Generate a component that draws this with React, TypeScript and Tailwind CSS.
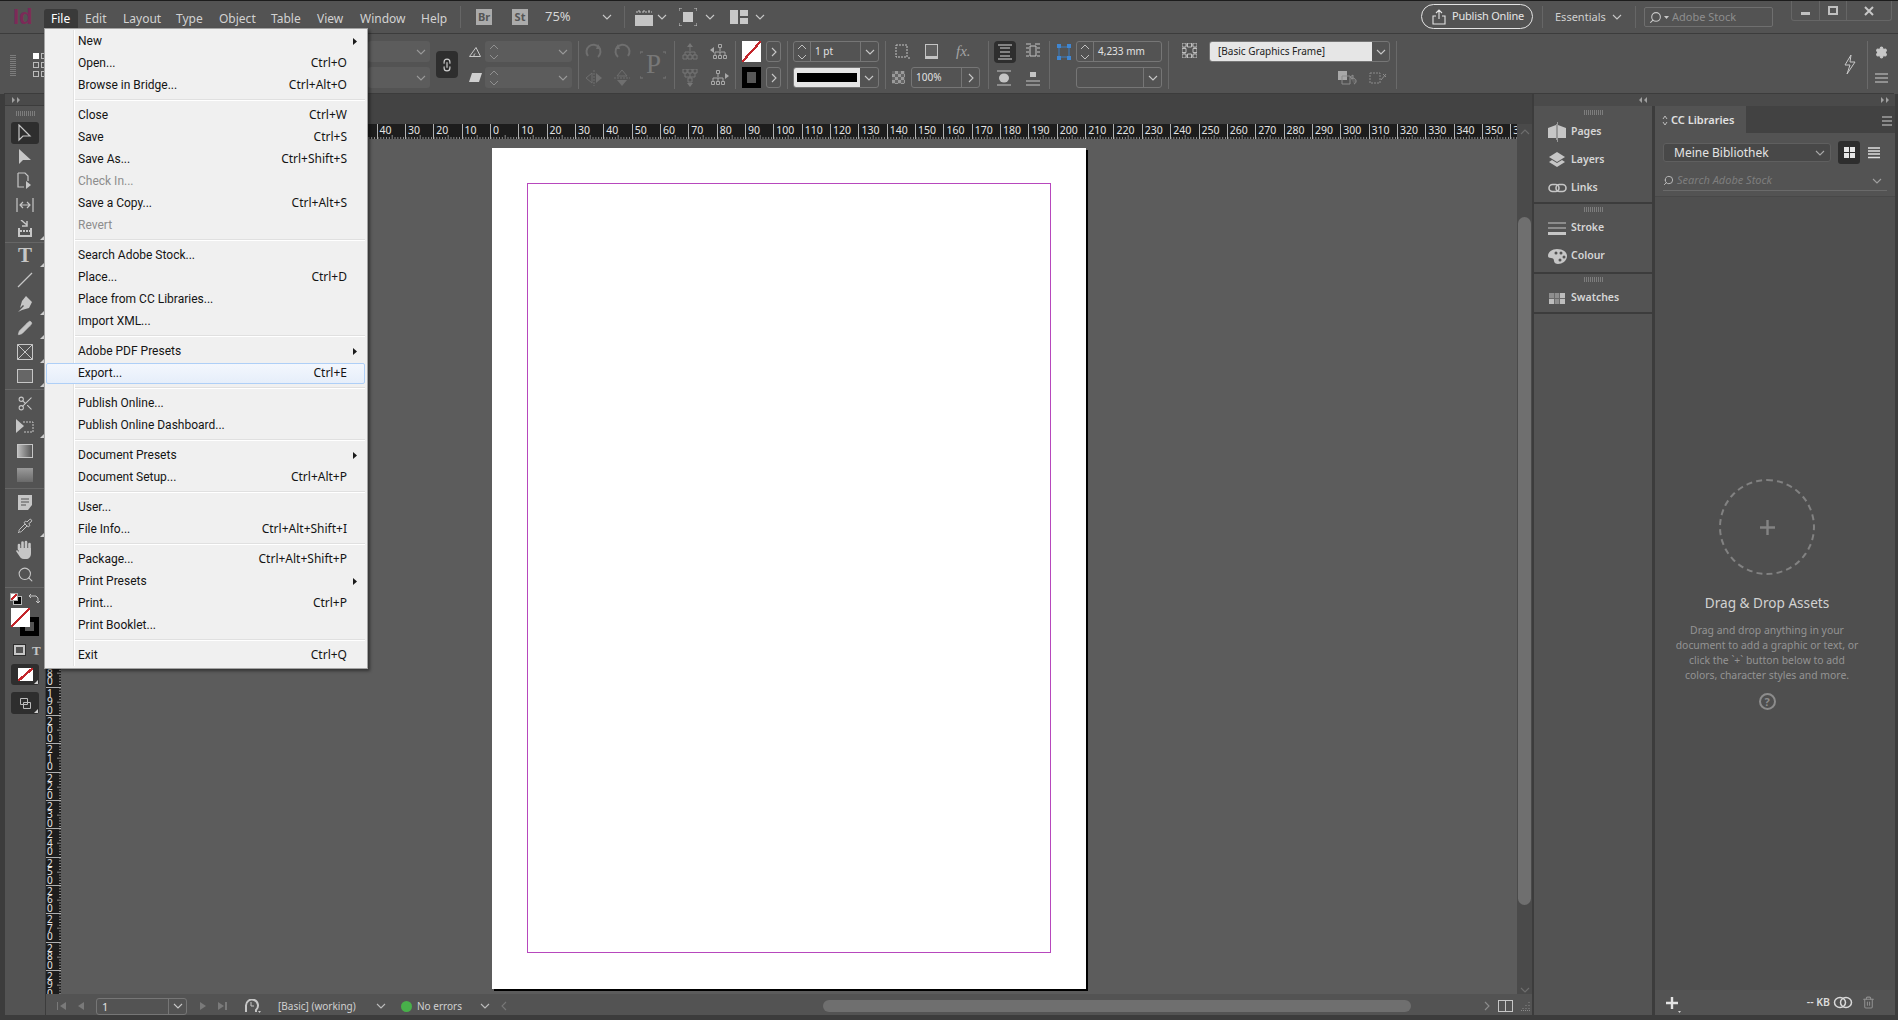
import React from "react";
import { Pencil, Pipette, Scissors, Search, Settings, Trash2, Link2 } from "lucide-react";

const FONT = "font-['Noto_Sans','Open_Sans',sans-serif]";

const Svg = ({ w = 20, h = 20, vb, className = "", children }: { w?: number; h?: number; vb?: string; className?: string; children: React.ReactNode }) => (
  <svg width={w} height={h} viewBox={vb ?? `0 0 ${w} ${h}`} className={`shrink-0 ${className}`} fill="none">
    {children}
  </svg>
);

const Chevron = ({ color = "#c8c8c8", className = "" }: { color?: string; className?: string }) => (
  <Svg w={10} h={6} className={className}><path d="M1 1l4 4 4-4" stroke={color} strokeWidth="1.1" /></Svg>
);
const ChevronR = ({ color = "#c8c8c8" }: { color?: string }) => (
  <Svg w={6} h={10}><path d="M1 1l4 4-4 4" stroke={color} strokeWidth="1.1" /></Svg>
);
const Stepper = ({ color = "#c0c0c0" }: { color?: string }) => (
  <Svg w={10} h={18}><path d="M1 6l4-4 4 4M1 12l4 4 4-4" stroke={color} strokeWidth="1" /></Svg>
);
const Corner = () => (
  <Svg w={4} h={4} className="absolute right-[1px] bottom-[1px]"><path d="M4 0v4H0z" fill="#cfcfcf" /></Svg>
);
const Grip = ({ className = "" }: { className?: string }) => (
  <div className={`h-[5px] w-[19px] bg-[repeating-linear-gradient(90deg,#7d7d7d_0_1px,transparent_1px_2px)] ${className}`} />
);
const Ham = ({ w = 16 }: { w?: number }) => (
  <Svg w={w} h={12}><path d={`M0 2h${w}M0 6h${w}M0 10h${w}`} stroke="#cfcfcf" strokeWidth="1.2" /></Svg>
);

/* ---------- top menu ---------- */
const topMenus = [
  { l: "File", c: "w-[34px] bg-[#3a3a3a] text-white rounded-t-[3px]" },
  { l: "Edit", c: "w-[38px]" },
  { l: "Layout", c: "w-[53px]" },
  { l: "Type", c: "w-[43px]" },
  { l: "Object", c: "w-[52px]" },
  { l: "Table", c: "w-[46px]" },
  { l: "View", c: "w-[43px]" },
  { l: "Window", c: "w-[61px]" },
  { l: "Help", c: "w-[40px]" },
];

const TopBar = () => (
  <div className="h-[34px] shrink-0 flex items-center border-t border-[#1c1c1c] border-b border-b-[#3c3c3c] text-[12px] text-[#d2d2d2] relative">
    <div className="w-[44px] shrink-0 pl-[13px] text-[22px] leading-none font-bold font-['Liberation_Sans',sans-serif] text-[#7c2a58]">Id</div>
    <div className="flex self-end h-[24px]">
      {topMenus.map((m) => (
        <div key={m.l} className={`pl-[7px] leading-[20px] h-[20px] ${m.c}`}>{m.l}</div>
      ))}
    </div>
    <div className="ml-[6px] w-px h-[22px] bg-[#666]" />
    <div className="ml-[15px] w-[16px] h-[16px] bg-[#ababab] text-[#555] text-[11px] font-bold leading-[16px] text-center">Br</div>
    <div className="ml-[20px] w-[16px] h-[16px] bg-[#ababab] text-[#555] text-[11px] font-bold leading-[16px] text-center">St</div>
    <div className="ml-[17px] w-[57px] text-[13px] text-[#d6d6d6]">75%</div>
    <Chevron />
    <div className="ml-[12px] w-px h-[22px] bg-[#666]" />
    <Svg w={18} h={18} className="ml-[10px]">
      <path d="M0 7h18v11H0z" fill="#c4c4c4" />
      <path d="M4 2v3M9 2v3M14 2v3M1 4h16" stroke="#c4c4c4" strokeDasharray="2 1" />
    </Svg>
    <Chevron className="ml-[4px]" />
    <Svg w={18} h={18} className="ml-[12px]">
      <path d="M4 4h10v10H4z" fill="#c8c8c8" />
      <path d="M0 3V0h3M15 0h3v3M18 15v3h-3M3 18H0v-3" stroke="#c8c8c8" />
    </Svg>
    <Chevron className="ml-[8px]" />
    <Svg w={18} h={14} className="ml-[15px]">
      <path d="M0 0h8v14H0zM10 0h8v6h-8zM10 8h8v6h-8z" fill="#c8c8c8" />
    </Svg>
    <Chevron className="ml-[7px]" />
    <div className="flex-1" />
    <div className="w-[112px] h-[25px] rounded-full border border-[#e4e4e4] flex items-center pl-[10px] gap-[6px] text-[11px] tracking-[-0.2px] text-[#e6e6e6] mb-[1px] whitespace-nowrap">
      <Svg w={14} h={16}><path d="M7 10V1M4 4l3-3 3 3M4 7H1v8h12V7h-3" stroke="#e4e4e4" strokeWidth="1.1" /></Svg>
      <span>Publish Online</span>
    </div>
    <div className="ml-[9px] w-px h-[22px] bg-[#666]" />
    <div className="ml-[12px] w-[57px] text-[11px] text-[#d0d0d0]">Essentials</div>
    <Chevron />
    <div className="ml-[13px] w-px h-[22px] bg-[#666]" />
    <div className="ml-[8px] w-[129px] h-[20px] rounded-[2px] border border-[#6f6f6f] flex items-center pl-[4px] gap-[2px] text-[11px] text-[#8e8e8e]">
      <Search size={13} color="#c8c8c8" className="-scale-x-100" />
      <Svg w={5} h={3}><path d="M0 0h5L2.500 3z" fill="#c8c8c8" /></Svg>
      <span className="ml-[1px]">Adobe Stock</span>
    </div>
    <div className="ml-[18px] w-[101px] h-[20px] self-start flex border border-t-0 border-[#666] rounded-b-[3px] shrink-0">
      <div className="w-[28px] flex items-center justify-center border-r border-[#666]"><div className="w-[9px] h-[3px] mt-[5px] bg-[#c0c0c0]" /></div>
      <div className="w-[27px] flex items-center justify-center border-r border-[#666]"><div className="w-[10px] h-[9px] border-2 border-[#c0c0c0]" /></div>
      <div className="flex-1 flex items-center justify-center">
        <Svg w={10} h={10}><path d="M1 1l8 8M9 1l-8 8" stroke="#c8c8c8" strokeWidth="2" /></Svg>
      </div>
    </div>
    <div className="w-[6px] shrink-0" />
  </div>
);

/* ---------- control panel ---------- */
const Sep = ({ className = "" }: { className?: string }) => <div className={`w-px h-[48px] bg-[#6a6a6a] shrink-0 ${className}`} />;
const EmptyField = ({ children, className = "" }: { children?: React.ReactNode; className?: string }) => (
  <div className={`h-[21px] rounded-[3px] bg-[#5c5c5c] flex items-center ${className}`}>{children}</div>
);
const StepField = () => (
  <EmptyField>
    <div className="w-[17px] flex justify-center"><Stepper color="#909090" /></div>
    <div className="flex-1" />
    <Chevron color="#999" className="mr-[4px]" />
  </EmptyField>
);
const Box = ({ children, className = "" }: { children?: React.ReactNode; className?: string }) => (
  <div className={`h-[21px] rounded-[3px] border border-[#767676] flex items-stretch text-[10px] text-[#e2e2e2] ${className}`}>{children}</div>
);
const Cell = ({ children, className = "" }: { children?: React.ReactNode; className?: string }) => (
  <div className={`flex items-center justify-center h-[21px] ${className}`}>{children}</div>
);

const ControlPanel = () => (
  <div className="h-[60px] shrink-0 flex items-center border-b border-[#3c3c3c] bg-[#535353] mx-[4px] pt-[2px]">
    <div className="w-[364px] shrink-0 flex items-center pl-[6px]">
      <div className="w-[6px] h-[22px] bg-[repeating-linear-gradient(0deg,#7d7d7d_0_1px,transparent_1px_2px)]" />
      <div className="ml-[17px] grid grid-cols-2 gap-y-[3px] gap-x-[2px] w-[14px]">
        <div className="w-[6px] h-[6px] bg-white" /><div className="w-[6px] h-[6px] border border-[#bbb]" />
        <div className="w-[6px] h-[6px] border border-[#bbb]" /><div className="w-[6px] h-[6px] border border-[#bbb]" />
        <div className="w-[6px] h-[6px] border border-[#bbb]" /><div className="w-[6px] h-[6px] border border-[#bbb]" />
      </div>
    </div>
    <div className="w-[62px] flex flex-col gap-[5px] shrink-0">
      <EmptyField className="justify-end"><Chevron color="#999" className="mr-[4px]" /></EmptyField>
      <EmptyField className="justify-end"><Chevron color="#999" className="mr-[4px]" /></EmptyField>
    </div>
    <div className="ml-[6px] w-[22px] h-[27px] rounded-[4px] bg-[#2e2e2e] flex items-center justify-center shrink-0">
      <Link2 size={14} color="#cfcfcf" className="rotate-90" />
    </div>
    <div className="ml-[8px] w-[19px] flex flex-col gap-[5px] shrink-0">
      <Cell><Svg w={13} h={11}><path d="M0.500 10.500h11L7 1.500z" stroke="#c8c8c8" /><path d="M5 10.500a3 3 0 0 1 1-3" stroke="#c8c8c8" /></Svg></Cell>
      <Cell><Svg w={13} h={11}><path d="M3 1h10l-3 9H0z" fill="#cfcfcf" /></Svg></Cell>
    </div>
    <div className="w-[87px] flex flex-col gap-[5px] shrink-0">
      <StepField />
      <StepField />
    </div>
    <Sep className="ml-[6px]" />
    <div className="w-[57px] grid grid-cols-2 gap-y-[5px] shrink-0 pl-[1px]">
      <Cell><Svg w={18} h={18}><path d="M3 13a7 7 0 1 1 10 1" stroke="#6f6f6f" strokeWidth="2" /><path d="M13 1l3 5h-5z" fill="#6f6f6f" /></Svg></Cell>
      <Cell><Svg w={18} h={18}><path d="M15 13a7 7 0 1 0-10 1" stroke="#6f6f6f" strokeWidth="2" /><path d="M5 1L2 6h5z" fill="#6f6f6f" /></Svg></Cell>
      <Cell><Svg w={18} h={16}><path d="M9 0v16" stroke="#6f6f6f" strokeDasharray="2 1" /><path d="M7 3v10L1 8z" stroke="#6f6f6f" /><path d="M11 3v10l6-5z" fill="#6f6f6f" /></Svg></Cell>
      <Cell><Svg w={16} h={18}><path d="M0 9h16" stroke="#6f6f6f" strokeDasharray="2 1" /><path d="M3 7h10L8 1z" stroke="#6f6f6f" /><path d="M3 11h10l-5 6z" fill="#6f6f6f" /></Svg></Cell>
    </div>
    <div className="w-[35px] h-[48px] shrink-0 flex items-center justify-center relative">
      <span className="text-[27px] leading-none font-['Liberation_Serif',serif] text-[#787878]">P</span>
      <Svg w={26} h={28} className="absolute left-[4px] top-[10px]"><path d="M0 3V1h3M23 1h3v2M26 25v2h-3M3 27H0v-2" stroke="#787878" /></Svg>
    </div>
    <Sep className="ml-[3px]" />
    <div className="w-[59px] grid grid-cols-2 gap-y-[5px] shrink-0">
      <Cell><Svg w={16} h={18}><path d="M8 4v4M3 9h10M3 9v3M8 9v3M13 9v3" stroke="#777" /><path d="M8 0l3 4H5z" fill="#777" /><path d="M1 12h4v4H1zM6 12h4v4H6zM11 12h4v4h-4z" stroke="#777" /></Svg></Cell>
      <Cell><Svg w={19} h={16}><path d="M10 4v3M5 8h10M5 8v3M10 8v3M15 8v3" stroke="#a8a8a8" /><path d="M8.500 0.500h3v3h-3zM3.500 11.500h3v3h-3zM8.500 11.500h3v3h-3zM13.500 11.500h3v3h-3z" stroke="#a8a8a8" /><path d="M4 3v6L0 6z" fill="#a8a8a8" /></Svg></Cell>
      <Cell><Svg w={16} h={18}><path d="M8 4v4M3 8h10M3 4v4M13 4v4" stroke="#777" /><path d="M1 0h4v4H1zM6 0h4v4H6zM11 0h4v4h-4zM6 9h4v4H6z" stroke="#777" /><path d="M5 14h6l-3 4z" fill="#777" /></Svg></Cell>
      <Cell><Svg w={19} h={16}><path d="M8 4v3M3 8h10M3 8v3M8 8v3M13 8v3" stroke="#a8a8a8" /><path d="M6.500 0.500h3v3h-3zM1.500 11.500h3v3h-3zM6.500 11.500h3v3h-3zM11.500 11.500h3v3h-3z" stroke="#a8a8a8" /><path d="M15 3v6l4-3z" fill="#a8a8a8" /></Svg></Cell>
    </div>
    <Sep className="ml-[1px]" />
    <div className="ml-[6px] flex flex-col gap-[5px] shrink-0 w-[39px]">
      <div className="flex items-center gap-[5px]">
        <div className="w-[19px] h-[21px] bg-[linear-gradient(to_bottom_right,#ffffff_46%,#c3262b_46%,#c3262b_54%,#ffffff_54%)]" />
        <div className="w-[15px] h-[21px] rounded-[3px] border border-[#767676] flex items-center justify-center"><ChevronR /></div>
      </div>
      <div className="flex items-center gap-[5px]">
        <div className="w-[19px] h-[21px] bg-black flex items-center justify-center"><div className="w-[9px] h-[11px] bg-[#575757]" /></div>
        <div className="w-[15px] h-[21px] rounded-[3px] border border-[#767676] flex items-center justify-center"><ChevronR /></div>
      </div>
    </div>
    <Sep className="ml-[6px]" />
    <div className="ml-[5px] w-[86px] flex flex-col gap-[5px] shrink-0">
      <Box>
        <div className="w-[17px] border-r border-[#767676] flex items-center justify-center"><Stepper /></div>
        <div className="flex-1 pl-[4px] leading-[19px]">1 pt</div>
        <div className="w-[18px] border-l border-[#767676] flex items-center justify-center"><Chevron /></div>
      </Box>
      <Box>
        <div className="flex-1 bg-[#e6e6e6] flex items-center justify-center rounded-l-[2px]"><div className="w-[60px] h-[9px] bg-black" /></div>
        <div className="w-[18px] flex items-center justify-center"><Chevron /></div>
      </Box>
    </div>
    <Sep className="ml-[6px]" />
    <div className="w-[102px] shrink-0 flex flex-col gap-[5px]">
      <div className="h-[21px] flex items-center pl-[9px] gap-[15px]">
        <Svg w={15} h={15}><path d="M1 1h11v12H1z" stroke="#c4c4c4" strokeDasharray="2 1" /><path d="M13 14h2" stroke="#c4c4c4" /></Svg>
        <div className="w-[13px] h-[15px] border border-[#c4c4c4] border-b-[3px] bg-[#606060]" />
        <span className="ml-[3px] text-[15px] italic font-['Liberation_Serif',serif] text-[#a4a4a4]">fx.</span>
      </div>
      <div className="h-[21px] flex items-center pl-[6px]">
        <div className="w-[13px] h-[13px] bg-[repeating-conic-gradient(#9a9a9a_0_25%,#666666_0_50%)] bg-[length:6px_6px]" />
        <Box className="ml-[6px] w-[69px]">
          <div className="flex-1 pl-[4px] leading-[19px]">100%</div>
          <div className="w-[18px] border-l border-[#767676] flex items-center justify-center"><ChevronR /></div>
        </Box>
      </div>
    </div>
    <Sep />
    <div className="w-[60px] grid grid-cols-[32px_28px] gap-y-[5px] shrink-0 pl-[5px]">
      <div className="w-[22px] h-[22px] rounded-[4px] bg-[#2e2e2e] flex items-center justify-center">
        <Svg w={14} h={16}><path d="M0 1h14M0 15h14M2 4h10M2 8h10M2 12h10" stroke="#d8d8d8" strokeWidth="1.200" /></Svg>
      </div>
      <Cell className="justify-start"><Svg w={14} h={16}><path d="M0 1h5M0 5h3M0 9h3M0 13h3M9 1h5M11 5h3M11 9h3M11 13h3M4 3h6v10H4z" stroke="#c4c4c4" /></Svg></Cell>
      <Cell className="!justify-start pl-[3px]"><Svg w={14} h={16}><path d="M0 1h14M0 15h14" stroke="#c4c4c4" /><ellipse cx="7" cy="8" rx="5" ry="4.500" fill="#c4c4c4" /></Svg></Cell>
      <Cell className="justify-start"><Svg w={14} h={16}><path d="M0 15h14M0 11h14" stroke="#c4c4c4" /><path d="M4 2h6v5H4z" fill="#c4c4c4" /></Svg></Cell>
    </div>
    <Sep />
    <div className="flex flex-col gap-[5px] shrink-0 ml-[7px]">
      <div className="flex items-center">
        <Svg w={14} h={16}>
          <path d="M2 3h10v10H2z" stroke="#3b7cc0" />
          <path d="M0 0h4v4H0zM10 0h4v4h-4zM0 12h4v4H0zM10 12h4v4h-4z" fill="#3f86d2" />
        </Svg>
        <Box className="ml-[5px] w-[86px]">
          <div className="w-[17px] border-r border-[#767676] flex items-center justify-center"><Stepper /></div>
          <div className="flex-1 pl-[4px] leading-[19px]">4,233 mm</div>
        </Box>
      </div>
      <div className="flex">
        <div className="w-[19px]" />
        <Box className="w-[86px]">
          <div className="flex-1" />
          <div className="w-[18px] border-l border-[#767676] flex items-center justify-center"><Chevron /></div>
        </Box>
      </div>
    </div>
    <Sep className="ml-[6px]" />
    <div className="w-[40px] h-[48px] shrink-0 flex items-start justify-center pt-[2px]">
      <Svg w={15} h={15}>
        <path d="M2 2h11v11H2z" stroke="#bdbdbd" />
        <path d="M0 0h4v4H0zM5.500 0h4v4h-4zM11 0h4v4h-4zM0 5.500h4v4H0zM11 5.500h4v4h-4zM0 11h4v4H0zM5.500 11h4v4h-4zM11 11h4v4h-4z" fill="#535353" stroke="#bdbdbd" />
      </Svg>
    </div>
    <div className="w-[181px] flex flex-col gap-[5px] shrink-0">
      <Box className="border-[#6d6d6d]">
        <div className="flex-1 bg-[#e6e6e6] text-[#222] pl-[8px] leading-[19px] rounded-l-[2px]">[Basic Graphics Frame]</div>
        <div className="w-[17px] flex items-center justify-center"><Chevron /></div>
      </Box>
      <div className="h-[21px] flex items-center justify-end pr-[3px] gap-[11px]">
        <Svg w={20} h={14}><path d="M0 0h9v9H0z" fill="#a8a8a8" /><path d="M4 5h8v8H4z" stroke="#8c8c8c" /><path d="M13 8a3 3 0 1 1 3 5M12 6l3-2v4z" stroke="#8c8c8c" fill="#8c8c8c" fillOpacity="0.3" /></Svg>
        <Svg w={18} h={14}><path d="M1 2h10v10H1z" stroke="#8c8c8c" strokeDasharray="2 1" /><path d="M12 9l5-6M14 3l3 3" stroke="#8c8c8c" /></Svg>
      </div>
    </div>
    <Sep className="ml-[6px]" />
    <div className="flex-1 flex justify-end pr-[10px]">
      <Svg w={14} h={20}><path d="M8 0L2 10h5l-3 9 8-12H7z" fill="none" stroke="#c8c8c8" strokeWidth="1" /></Svg>
    </div>
    <Sep />
    <div className="w-[26px] shrink-0 flex flex-col items-center gap-[13px]">
      <Settings size={13} color="#c8c8c8" fill="#c8c8c8" />
      <Ham w={13} />
    </div>
  </div>
);

/* ---------- tool bar ---------- */
const g = "#c6c6c6";
const HandIcon = () => (
  <Svg w={18} h={20}>
    <path d="M3 9V5M6.500 8V2.500M10 8V2M13.500 9V4" stroke={g} strokeWidth="2.600" strokeLinecap="round" />
    <path d="M2 8h13v5c0 4-2 6-5 6H8c-3 0-4-2-6-5L0 11l1-1 2 2z" fill={g} />
  </Svg>
);
const tools: { k: string; i: React.ReactNode; c?: boolean }[][] = [
  [
    { k: "sel", i: <Svg w={16} h={18}><path d="M2 1v15l4-4h7z" stroke={g} strokeWidth="1.200" /></Svg> },
    { k: "dsel", i: <Svg w={16} h={18}><path d="M2 1v15l4-4h8z" fill={g} /></Svg> },
    { k: "page", i: <Svg w={16} h={18}><path d="M1 1h7l3 3v5M1 1v14h6" stroke={g} strokeWidth="1.200" /><path d="M9 9v8l5-4z" fill={g} /></Svg> },
    { k: "gap", i: <Svg w={18} h={14}><path d="M1 0v14M17 0v14M4 7h10M7 4L4 7l3 3M11 4l3 3-3 3" stroke={g} strokeWidth="1.200" /></Svg> },
    { k: "coll", i: <Svg w={16} h={18}><path d="M4 0l6 5M5 6h5V1" stroke={g} strokeWidth="1.500" /><path d="M1 8h2v7h10V8h2v9H1z" fill={g} /><path d="M3 11h10" stroke={g} strokeWidth="2" strokeDasharray="2 1" /></Svg>, c: true },
  ],
  [
    { k: "type", i: <span className="font-['Liberation_Serif',serif] font-bold text-[21px] leading-none text-[#c6c6c6]">T</span>, c: true },
    { k: "line", i: <Svg w={16} h={16}><path d="M1 15L15 1" stroke={g} strokeWidth="1.300" /></Svg> },
    { k: "pen", i: <Svg w={16} h={18}><path d="M9 1l6 6-3 6-7 2-4 2 6-6-1-1-3 3 2-7z" fill={g} /></Svg>, c: true },
    { k: "pencil", i: <Pencil size={16} color={g} fill={g} strokeWidth={1} />, c: true },
    { k: "frame", i: <Svg w={16} h={16}><path d="M0.500 0.500h15v15h-15zM0.500 0.500l15 15M15.500 0.500l-15 15" stroke={g} /></Svg>, c: true },
    { k: "rect", i: <div className="w-[16px] h-[14px] border border-[#c6c6c6] bg-[#666]" />, c: true },
  ],
  [
    { k: "scis", i: <Scissors size={17} color={g} strokeWidth={1.5} /> },
    { k: "free", i: <Svg w={20} h={16}><path d="M8 3h10v10H8" stroke={g} strokeDasharray="2 1" /><path d="M1 0v14l8-7z" fill={g} /></Svg>, c: true },
    { k: "grad", i: <div className="w-[16px] h-[14px] border border-[#c6c6c6] bg-[linear-gradient(to_right,#bbbbbb,#555555)]" /> },
    { k: "feather", i: <div className="w-[16px] h-[14px] bg-[#a8a8a8] bg-[linear-gradient(to_bottom,#9a9a9a,#6a6a6a)]" /> },
  ],
  [
    { k: "note", i: <Svg w={14} h={15}><path d="M0 0h14v10l-4 5H0z" fill={g} /><path d="M3 4h8M3 7h8M3 10h5" stroke="#535353" /></Svg>, c: false },
    { k: "eye", i: <Pipette size={16} color={g} strokeWidth={1.5} />, c: true },
    { k: "hand", i: <HandIcon /> },
    { k: "zoom", i: <Search size={17} color={g} strokeWidth={1.5} /> },
  ],
];

const ToolBar = () => (
  <div className="w-[40px] ml-[4px] shrink-0 flex flex-col border-x border-[#3c3c3c] bg-[#535353] box-content">
    <div className="h-[12px] bg-[#4a4a4a] border-b border-[#3c3c3c] flex items-center pl-[7px]">
      <Svg w={9} h={6}><path d="M0 0l3 3-3 3zM5 0l3 3-3 3z" fill="#a0a0a0" /></Svg>
    </div>
    <div className="h-[15px] flex items-center justify-center"><Grip className="w-[17px]" /></div>
    <div className="flex flex-col items-stretch">
      {tools.map((grp, gi) => (
        <React.Fragment key={gi}>
          {grp.map((t, ti) => (
            <div key={t.k} className="h-[24px] flex items-center justify-center relative">
              {gi === 0 && ti === 0 && <div className="absolute left-[6px] top-[1px] w-[28px] h-[22px] rounded-[3px] bg-[#2e2e2e]" />}
              <div className="relative">{t.i}</div>
              {t.c && <Corner />}
            </div>
          ))}
          <div className="h-[3px] flex items-center"><div className="w-full h-px bg-[#666]" /></div>
        </React.Fragment>
      ))}
    </div>
    <div className="h-[19px] flex items-center pl-[5px] gap-[6px]">
      <div className="relative w-[12px] h-[12px]">
        <div className="absolute left-[3px] top-[3px] w-[9px] h-[9px] bg-black border border-[#bbb]" />
        <div className="absolute left-0 top-0 w-[8px] h-[8px] bg-[linear-gradient(to_bottom_right,#ffffff_40%,#c3262b_40%,#c3262b_60%,#ffffff_60%)] border border-[#aaa]" />
      </div>
      <Svg w={12} h={11}><path d="M1 3h7l2 2v5M3 1L1 3l2 2M8 8l2 2 2-2" stroke={g} /></Svg>
    </div>
    <div className="h-[30px] relative">
      <div className="absolute left-[15px] top-[9px] w-[19px] h-[19px] bg-black flex items-center justify-center">
        <div className="w-[9px] h-[9px] bg-[#535353]" />
      </div>
      <div className="absolute left-[6px] top-0 w-[19px] h-[19px] bg-[linear-gradient(to_bottom_right,#ffffff_45%,#c3262b_45%,#c3262b_55%,#ffffff_55%)]" />
    </div>
    <div className="h-[24px] flex items-center pl-[9px] gap-[7px]">
      <div className="w-[11px] h-[10px] border-2 border-[#c6c6c6] outline outline-1 outline-[#2e2e2e]" />
      <span className="font-['Liberation_Serif',serif] font-bold text-[13px] text-[#c6c6c6] leading-none">T</span>
    </div>
    <div className="flex justify-start pl-[6px] mt-[2px]">
      <div className="relative w-[28px] h-[21px] rounded-[3px] bg-[#2e2e2e] flex items-center justify-center">
        <div className="w-[15px] h-[13px] bg-[linear-gradient(to_bottom_right,#ffffff_44%,#c3262b_44%,#c3262b_56%,#ffffff_56%)]" />
        <Corner />
      </div>
    </div>
    <div className="flex justify-start pl-[6px] mt-[7px]">
      <div className="relative w-[28px] h-[22px] rounded-[3px] bg-[#2e2e2e] flex items-center justify-center">
        <Svg w={11} h={11}><path d="M0.500 0.500h7v6h-7zM3.500 4.500h7v6h-7z" stroke="#bdbdbd" /></Svg>
        <Corner />
      </div>
    </div>
  </div>
);

/* ---------- rulers ---------- */
const hTicks = Array.from({ length: 10 }, (_, i) => i);
const hRuler = Array.from({ length: 53 }, (_, i) => ({ n: Math.abs(i - 16) * 10, hidden: i < 11 }));
const vRuler = Array.from({ length: 30 }, (_, i) => i * 10);

const HRuler = () => (
  <div className="flex-1 h-[15px] bg-[#1d1d1d] overflow-hidden flex">
    <div className="flex shrink-0 -ml-[24.6px]">
      {hRuler.map((c, i) => (
        <div key={i} className="w-[28.35px] h-[15px] shrink-0 relative border-l border-[#b0b0b0] text-[10.5px] leading-[13px] pl-[2px] text-[#e4e4e4] box-border">
          {c.hidden ? "" : c.n}
          <svg width="28" height="4" className="absolute left-0 bottom-0">
            {hTicks.map((t) => (
              <path key={t} d={`M${t * 2.835} ${t === 5 ? 0 : 2}V4`} stroke="#a8a8a8" strokeWidth="0.8" />
            ))}
          </svg>
        </div>
      ))}
    </div>
  </div>
);

const VRuler = () => (
  <div className="w-[15px] shrink-0 bg-[#1d1d1d] overflow-hidden flex flex-col">
    <div className="h-[9px] shrink-0" />
    {vRuler.map((n) => (
      <div key={n} className="h-[28.35px] shrink-0 relative border-t border-[#b0b0b0] box-border text-[10px] leading-[8.500px] text-[#e4e4e4] pl-[1px] pt-[1px]">
        {n >= 180 && String(n).split("").map((d, i) => <div key={i}>{d}</div>)}
        <svg width="4" height="28" className="absolute right-0 top-0">
          {hTicks.map((t) => (
            <path key={t} d={`M${t === 5 ? 0 : 2} ${t * 2.835}H4`} stroke="#a8a8a8" strokeWidth="0.8" />
          ))}
        </svg>
      </div>
    ))}
  </div>
);

/* ---------- document ---------- */
const Doc = () => (
  <div className="flex-1 min-w-0 flex flex-col">
    <div className="h-[30px] shrink-0 bg-[#434343]" />
    <div className="flex-1 min-h-0 flex">
      <div className="flex-1 min-w-0 flex flex-col">
        <div className="h-[15px] flex shrink-0">
          <div className="w-[15px] bg-[#1d1d1d]" />
          <HRuler />
        </div>
        <div className="flex-1 min-h-0 flex">
          <VRuler />
          <div className="flex-1 min-w-0 bg-[#5c5c5c] overflow-hidden pl-[431px] pt-[9px]">
            <div className="w-[594px] h-[841px] bg-white shadow-[2px_2px_0_#000] pl-[35px] pr-[35px] pt-[35px] pb-[36px]">
              <div className="w-full h-full border border-[#b748bd]" />
            </div>
          </div>
        </div>
      </div>
      <div className="w-[15px] shrink-0 bg-[#4a4a4a] flex flex-col items-center">
        <Chevron color="#6e6e6e" className="rotate-180 mt-[5px]" />
        <div className="w-[13px] h-[688px] mt-[82px] rounded-full bg-[#6f6f6f]" />
        <div className="flex-1" />
        <Chevron color="#6e6e6e" className="mb-[1px]" />
      </div>
    </div>
    <div className="h-[21px] shrink-0 bg-[#535353] flex items-center pt-[3px] text-[10px] text-[#d0d0d0]">
      <Svg w={10} h={10} className="ml-[11px]"><path d="M0 1v8" stroke="#7a7a7a" strokeWidth="2" /><path d="M9 1v8L3 5z" fill="#7a7a7a" /></Svg>
      <Svg w={6} h={10} className="ml-[11px]"><path d="M6 1v8L0 5z" fill="#7a7a7a" /></Svg>
      <div className="ml-[12px] w-[91px] h-[17px] rounded-[3px] border border-[#767676] flex items-stretch text-[11px] text-[#e0e0e0]">
        <div className="flex-1 pl-[5px] leading-[15px]">1</div>
        <div className="w-[18px] border-l border-[#767676] flex items-center justify-center"><Chevron /></div>
      </div>
      <Svg w={6} h={10} className="ml-[13px]"><path d="M0 1v8l6-4z" fill="#7a7a7a" /></Svg>
      <Svg w={10} h={10} className="ml-[12px]"><path d="M0 1v8l6-4z" fill="#7a7a7a" /><path d="M8 1v8" stroke="#7a7a7a" strokeWidth="2" /></Svg>
      <Svg w={17} h={15} className="ml-[16px]"><path d="M2 13V7a6 6 0 1 1 10 4v2" stroke="#c6c6c6" strokeWidth="2" /><path d="M7 3v4h3" stroke="#c6c6c6" /><path d="M14 12h3l-1.500 2z" fill="#c6c6c6" /></Svg>
      <span className="ml-[17px] w-[98px] shrink-0">[Basic] (working)</span>
      <Chevron color="#bdbdbd" />
      <div className="ml-[15px] w-[11px] h-[11px] rounded-full bg-[#48b04a] shrink-0" />
      <span className="ml-[5px] w-[63px] shrink-0">No errors</span>
      <Chevron color="#bdbdbd" />
      <Svg w={6} h={10} className="ml-[11px]"><path d="M5 1L1 5l4 4" stroke="#777" strokeWidth="1.100" /></Svg>
      <div className="w-[316px] shrink-0" />
      <div className="w-[588px] h-[12px] rounded-full bg-[#6f6f6f] shrink-0" />
      <div className="flex-1" />
      <Svg w={6} h={10} className="mr-[8px]"><path d="M1 1l4 4-4 4" stroke="#8d8d8d" strokeWidth="1.100" /></Svg>
      <div className="w-[15px] h-[12px] border border-[#c6c6c6] flex mr-[7px]"><div className="w-1/2 border-r border-[#c6c6c6]" /></div>
      <Svg w={10} h={10} className="mr-[2px]"><path d="M9 1v1M6 4v1M9 4v1M3 7v1M6 7v1M9 7v1M1 9.500h9" stroke="#8a8a8a" strokeDasharray="1 1" /></Svg>
    </div>
  </div>
);

/* ---------- panels ---------- */
const StrIcon = ({ children }: { children: React.ReactNode }) => <div className="w-[26px] flex justify-center">{children}</div>;
const Tabs = [
  [
    { l: "Pages", i: <Svg w={18} h={20}><path d="M8.500 2v16M9.500 0v20" stroke={g} strokeWidth="0.600" /><path d="M0 6l8-3v13H0zM10 3l8 3v10h-8z" fill={g} /></Svg> },
    { l: "Layers", i: <Svg w={18} h={18}><path d="M9 1l8 5-8 5-8-5z" fill={g} /><path d="M1 11l8 5 8-5-3-2-5 3-5-3z" fill={g} /></Svg> },
    { l: "Links", i: <Svg w={19} h={10}><rect x="1" y="1.500" width="10" height="7" rx="3.500" stroke={g} strokeWidth="1.600" /><rect x="8" y="1.500" width="10" height="7" rx="3.500" stroke={g} strokeWidth="1.600" /></Svg> },
  ],
  [
    { l: "Stroke", i: <Svg w={18} h={13}><path d="M0 1h18M0 6h18" stroke={g} /><path d="M0 10h18v3H0z" fill={g} /></Svg> },
    { l: "Colour", i: <Svg w={19} h={15}><path d="M9 0c6 0 10 3 10 7 0 5-5 8-9 8-2 0-4-1-4-3 0-2-1-3-3-3-2 0-3-1-3-2 0-4 4-7 9-7z" fill={g} /><circle cx="8" cy="4" r="1.500" fill="#535353" /><circle cx="13" cy="4" r="1.500" fill="#535353" /><circle cx="16" cy="8" r="1.500" fill="#535353" /><circle cx="12" cy="11" r="1.500" fill="#535353" /></Svg> },
  ],
  [
    { l: "Swatches", i: <div className="w-[16px] h-[11px] grid grid-cols-3 gap-px bg-[#6a6a6a]"><div className="bg-[#8e8e8e]" /><div className="bg-[#8e8e8e]" /><div className="bg-[#bdbdbd]" /><div className="bg-[#bdbdbd]" /><div className="bg-[#8e8e8e]" /><div className="bg-[#bdbdbd]" /></div> },
  ],
];

const IconPanel = () => (
  <div className="w-[118px] ml-[2px] shrink-0 flex flex-col bg-[#535353] text-[10.5px] font-semibold text-[#d6d6d6]">
    {Tabs.map((grp, i) => (
      <div key={i} className={`border-b-2 border-[#3c3c3c] flex flex-col ${i === 1 ? "pb-[2px]" : "pb-0"}`}>
        <div className={`flex items-center justify-center ${i === 0 ? "h-[12px]" : "h-[10px]"}`}><Grip /></div>
        {grp.map((t) => (
          <div key={t.l} className="h-[28px] flex items-center pl-[10px] gap-[1px]">
            <StrIcon>{t.i}</StrIcon>
            <span>{t.l}</span>
          </div>
        ))}
      </div>
    ))}
  </div>
);

const CCPanel = () => (
  <div className="w-[240px] ml-[3px] shrink-0 flex flex-col bg-[#4f4f4f]">
    <div className="h-[27px] flex bg-[#424242] shrink-0">
      <div className="w-[91px] bg-[#535353] flex items-center pl-[7px] pt-[2px] gap-[3px] text-[11px] font-semibold text-[#e0e0e0]">
        <Svg w={6} h={11}><path d="M1 4l2-3 2 3M1 7l2 3 2-3" stroke="#bdbdbd" /></Svg>
        <span>CC Libraries</span>
      </div>
      <div className="flex-1 flex items-center justify-end pr-[3px] pt-[2px]"><Ham w={10} /></div>
    </div>
    <div className="h-[64px] shrink-0 bg-[#535353] border-b border-[#484848] px-[8px] flex flex-col">
      <div className="flex items-center mt-[8px]">
        <div className="w-[168px] h-[19px] rounded-[3px] bg-[#484848] border border-[#5f5f5f] flex items-center justify-between pl-[10px] pr-[5px] text-[12px] text-[#e4e4e4]">
          <span>Meine Bibliothek</span>
          <Chevron color="#a8a8a8" />
        </div>
        <div className="ml-[7px] w-[22px] h-[23px] rounded-[3px] bg-[#2e2e2e] flex items-center justify-center">
          <div className="grid grid-cols-2 gap-[1px]">
            <div className="w-[5px] h-[5px] bg-[#e8e8e8]" /><div className="w-[5px] h-[5px] bg-[#e8e8e8]" />
            <div className="w-[5px] h-[5px] bg-[#e8e8e8]" /><div className="w-[5px] h-[5px] bg-[#e8e8e8]" />
          </div>
        </div>
        <Svg w={12} h={12} className="ml-[8px]"><path d="M0 1h12M0 4h12M0 7h12M0 10.500h12" stroke="#dedede" strokeWidth="1.500" /></Svg>
      </div>
      <div className="mt-[7px] h-[20px] flex items-center border-b border-[#6a6a6a] pr-[5px]">
        <Search size={11} color="#c0c0c0" className="-scale-x-100" />
        <span className="ml-[3px] italic text-[11px] text-[#7e7e7e] flex-1">Search Adobe Stock</span>
        <Chevron color="#a0a0a0" />
      </div>
    </div>
    <div className="flex-1 flex flex-col items-center">
      <div className="flex flex-col items-center w-full pr-[16px]">
        <div className="mt-[282px] w-[96px] h-[96px] rounded-full border-2 border-dashed border-[#828282] flex items-center justify-center">
          <Svg w={15} h={15}><path d="M7.500 0v15M0 7.500h15" stroke="#838383" strokeWidth="2.400" /></Svg>
        </div>
        <div className="mt-[18px] text-[13.6px] text-[#d2d2d2] leading-[20px]">Drag &amp; Drop Assets</div>
        <div className="mt-[10px] w-[224px] text-[10.4px] leading-[15px] text-[#949494] text-center">
          Drag and drop anything in your<br />document to add a graphic or text, or<br />click the `+` button below to add<br />colors, character styles and more.
        </div>
        <div className="mt-[10px] w-[17px] h-[17px] rounded-full border-2 border-[#8c8c8c] text-[11px] font-bold leading-[13px] text-[#8c8c8c] text-center">?</div>
      </div>
      <div className="flex-1" />
      <div className="w-full h-[25px] bg-[#535353] flex items-center pl-[11px] text-[#dcdcdc]">
        <Svg w={16} h={16} className="mt-[4px]"><path d="M6 0v12M0 6h12" stroke="#e4e4e4" strokeWidth="2.400" /><path d="M12 14h3l-1.500 2z" fill="#d0d0d0" /></Svg>
        <div className="flex-1" />
        <span className="text-[10.5px] font-semibold">-- KB</span>
        <Svg w={20} h={13} className="ml-[3px]"><ellipse cx="7" cy="6.500" rx="5.500" ry="5" stroke="#d8d8d8" strokeWidth="1.500" /><ellipse cx="13" cy="6.500" rx="5.500" ry="5" stroke="#d8d8d8" strokeWidth="1.500" /></Svg>
        <Trash2 size={13} color="#8e8e8e" className="ml-[9px] mr-[20px]" />
      </div>
    </div>
  </div>
);

const Panels = () => (
  <div className="shrink-0 flex flex-col bg-[#3c3c3c]">
    <div className="h-[12px] flex shrink-0">
      <div className="ml-[2px] w-[361px] bg-[#4a4a4a] flex items-center pl-[105px]">
        <Svg w={8} h={6}><path d="M3 0L0 3l3 3zM8 0L5 3l3 3z" fill="#a0a0a0" /></Svg>
        <div className="flex-1" />
        <Svg w={8} h={6} className="mr-[6px]"><path d="M0 0l3 3-3 3zM5 0l3 3-3 3z" fill="#a0a0a0" /></Svg>
      </div>
    </div>
    <div className="flex-1 min-h-0 flex">
      <IconPanel />
      <CCPanel />
    </div>
  </div>
);

/* ---------- File menu ---------- */
type Row = { l?: string; s?: string; dis?: boolean; sub?: boolean; hot?: boolean } | null;
const rows: Row[] = [
  { l: "New", sub: true }, { l: "Open...", s: "Ctrl+O" }, { l: "Browse in Bridge...", s: "Ctrl+Alt+O" }, null,
  { l: "Close", s: "Ctrl+W" }, { l: "Save", s: "Ctrl+S" }, { l: "Save As...", s: "Ctrl+Shift+S" }, { l: "Check In...", dis: true }, { l: "Save a Copy...", s: "Ctrl+Alt+S" }, { l: "Revert", dis: true }, null,
  { l: "Search Adobe Stock..." }, { l: "Place...", s: "Ctrl+D" }, { l: "Place from CC Libraries..." }, { l: "Import XML..." }, null,
  { l: "Adobe PDF Presets", sub: true }, { l: "Export...", s: "Ctrl+E", hot: true }, null,
  { l: "Publish Online..." }, { l: "Publish Online Dashboard..." }, null,
  { l: "Document Presets", sub: true }, { l: "Document Setup...", s: "Ctrl+Alt+P" }, null,
  { l: "User..." }, { l: "File Info...", s: "Ctrl+Alt+Shift+I" }, null,
  { l: "Package...", s: "Ctrl+Alt+Shift+P" }, { l: "Print Presets", sub: true }, { l: "Print...", s: "Ctrl+P" }, { l: "Print Booklet..." }, null,
  { l: "Exit", s: "Ctrl+Q" },
];

const FileMenu = () => (
  <div className="absolute left-[44px] top-[28px] w-[324px] h-[641px] bg-[#f0f0f0] border border-[#a3a3a3] shadow-[2px_2px_3px_rgba(0,0,0,0.45)] pt-[1px] text-[12px] text-[#141414] z-10">
    <div className="absolute left-[28px] top-[1px] bottom-[2px] w-[2px] bg-[linear-gradient(to_right,#e2e2e2_50%,#ffffff_50%)]" />
    {rows.map((r, i) =>
      r === null ? (
        <div key={i} className="h-[8px] pl-[30px] pr-[2px] flex items-center relative"><div className="w-full h-[2px] bg-[linear-gradient(to_bottom,#e0e0e0_50%,#ffffff_50%)]" /></div>
      ) : (
        <div key={i} className="relative h-[22px] flex items-center pl-[33px] pr-[20px]">
          {r.hot && <div className="absolute left-[1px] right-[2px] top-[1px] bottom-0 rounded-[2px] border border-[#aecff7] bg-[linear-gradient(to_bottom,#f3f7fd,#e6eefa)]" />}
          <span className={`relative font-['Roboto',sans-serif] ${r.dis ? "text-[#8d8d8d]" : ""}`}>{r.l}</span>
          <div className="flex-1" />
          {r.s && <span className="relative">{r.s}</span>}
          {r.sub && <Svg w={4} h={7} className="absolute right-[10px]"><path d="M0 0l4 3.500L0 7z" fill="#1a1a1a" /></Svg>}
        </div>
      )
    )}
  </div>
);

export default function App() {
  return (
    <div className={`relative w-[1898px] h-[1020px] overflow-hidden bg-[#535353] flex flex-col ${FONT}`}>
      <TopBar />
      <ControlPanel />
      <div className="flex-1 min-h-0 flex bg-[#3c3c3c] pb-[5px]">
        <ToolBar />
        <Doc />
        <Panels />
        <div className="w-[3px] shrink-0" />
      </div>
      <FileMenu />
    </div>
  );
}
